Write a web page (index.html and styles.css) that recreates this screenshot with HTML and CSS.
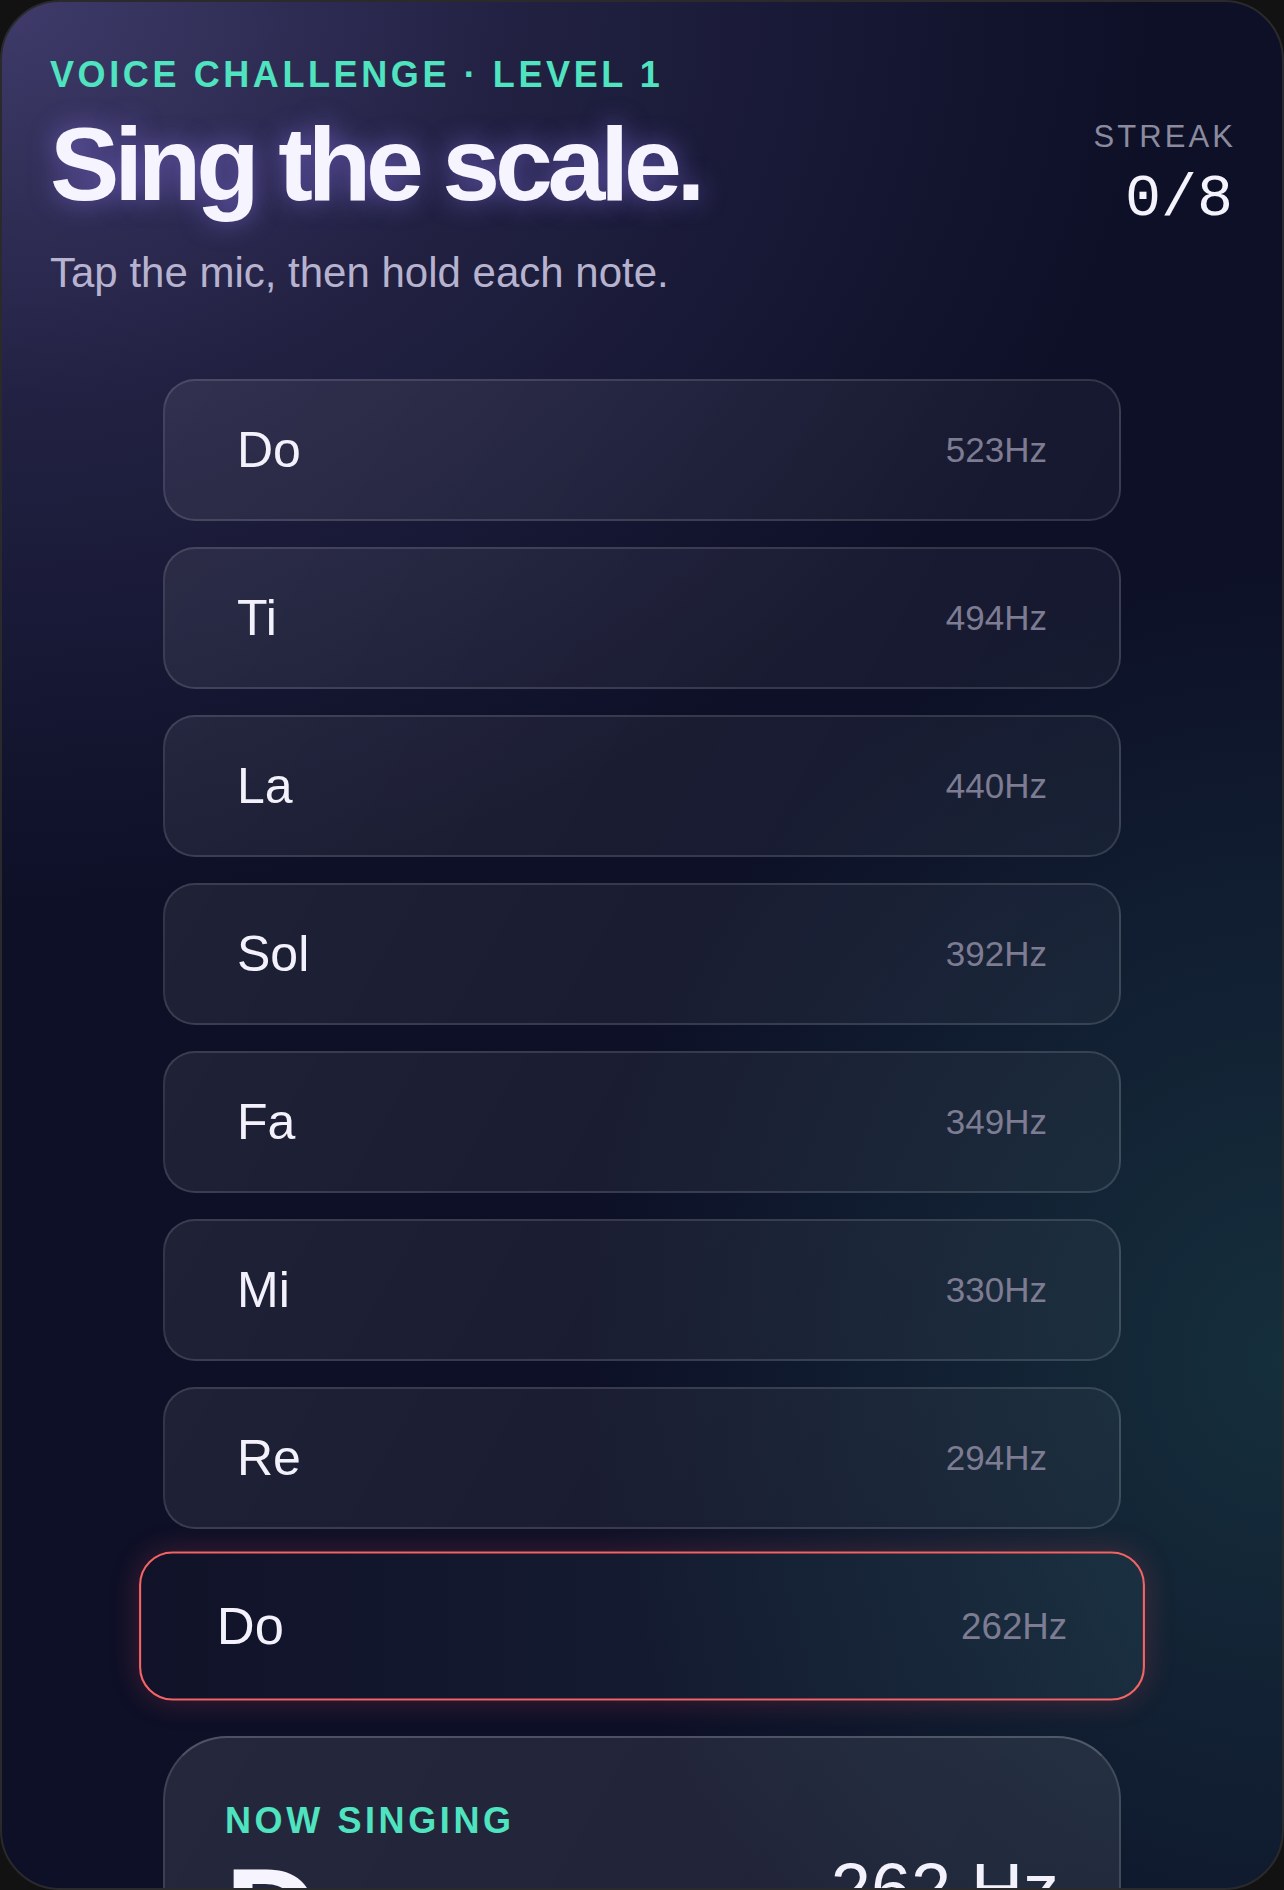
FILE: index.html
```html
<!DOCTYPE html>
<html>
<head>
    <title>Voice Challenge</title>
    <link rel="stylesheet" href="styles.css">
</head>
<body>
    <div class="device">
        <div class="top">
            <div class="eyebrow">Voice Challenge · Level 1</div>
            <div class="title-row">
                <h1 class="title">Sing the scale.</h1>
                <div class="streak">
                    <div class="streak-label">Streak</div>
                    <div class="streak-count">0/8</div>
                </div>
            </div>
            <p class="sub">Tap the mic, then hold each note.</p>
        </div>

        <div class="notes">
            <div class="note"><span class="name">Do</span><span class="hz">523Hz</span></div>
            <div class="note"><span class="name">Ti</span><span class="hz">494Hz</span></div>
            <div class="note"><span class="name">La</span><span class="hz">440Hz</span></div>
            <div class="note"><span class="name">Sol</span><span class="hz">392Hz</span></div>
            <div class="note"><span class="name">Fa</span><span class="hz">349Hz</span></div>
            <div class="note"><span class="name">Mi</span><span class="hz">330Hz</span></div>
            <div class="note"><span class="name">Re</span><span class="hz">294Hz</span></div>
            <div class="note active"><span class="name">Do</span><span class="hz">262Hz</span></div>
        </div>

        <div class="now">
            <div class="now-label">Now singing</div>
            <div class="now-row">
                <span class="now-name">Do</span>
                <span class="now-hz">262 Hz</span>
            </div>
        </div>
    </div>
</body>
</html>
```

FILE: styles.css
```css
html, body { margin: 0; padding: 0; }
body {
    background: #121212;
    font-family: "Liberation Sans", Arial, sans-serif;
    color: #f3f1fb;
}
.device {
    box-sizing: border-box;
    height: 100vh;
    overflow: hidden;
    border: 2px solid #2a2a2c;
    border-radius: 60px;
    background:
        radial-gradient(ellipse 1150px 900px at 0% 0%, rgba(66, 61, 110, 0.95) 0%, rgba(50, 46, 88, 0.55) 45%, rgba(14, 16, 39, 0) 100%),
        radial-gradient(ellipse 700px 800px at 100% 72%, rgba(28, 72, 78, 0.55) 0%, rgba(14, 16, 39, 0) 100%),
        #0d1027;
}

/* header */
.top { padding: 55px 49px 0 48px; }
.eyebrow {
    font-weight: bold;
    font-size: 36px;
    line-height: 1;
    letter-spacing: 0.1em;
    text-transform: uppercase;
    color: #4fe3bf;
}
.title-row {
    display: flex;
    justify-content: space-between;
    align-items: flex-start;
    margin-top: 19px;
}
.title {
    margin: 0;
    font-size: 104px;
    line-height: 1;
    font-weight: bold;
    letter-spacing: -0.05em;
    color: #f6f4ff;
    text-shadow: 0 0 26px rgba(150, 128, 255, 0.55);
}
.streak {
    text-align: right;
    margin-top: 9px;
}
.streak-label {
    font-size: 31px;
    line-height: 1;
    letter-spacing: 0.1em;
    margin-right: -0.1em;
    text-transform: uppercase;
    color: #8b8a9f;
}
.streak-count {
    font-family: "Liberation Mono", monospace;
    font-size: 60px;
    line-height: 1;
    margin-top: 17px;
    color: #f4f2fb;
}
.sub {
    margin: 23px 0 0;
    font-size: 42px;
    line-height: 1;
    color: #b7b3cf;
}

/* note list */
.notes {
    width: 958px;
    margin: 85px auto 0;
    display: flex;
    flex-direction: column;
    gap: 26px;
}
.note {
    box-sizing: border-box;
    height: 142px;
    padding: 0 72px;
    display: flex;
    align-items: center;
    justify-content: space-between;
    border: 2px solid rgba(255, 255, 255, 0.13);
    border-radius: 32px;
    background: linear-gradient(120deg, rgba(255, 255, 255, 0.075), rgba(255, 255, 255, 0.035));
}
.note .name { font-size: 50px; color: #f3f1fb; }
.note .hz { font-size: 35px; color: #7d7c92; }
.note.active {
    transform: scale(1.05);
    border: 2.5px solid #f46464;
    background: linear-gradient(90deg, rgba(20, 20, 42, 0.55), rgba(40, 70, 84, 0.35));
    box-shadow: 0 0 28px rgba(255, 80, 90, 0.22);
}

/* now singing */
.now {
    box-sizing: border-box;
    width: 958px;
    margin: 39px auto 0;
    padding: 65px 60px;
    border: 2px solid rgba(255, 255, 255, 0.13);
    border-top-color: rgba(255, 255, 255, 0.2);
    border-radius: 64px;
    background: linear-gradient(120deg, rgba(255, 255, 255, 0.1), rgba(255, 255, 255, 0.08));
}
.now-label {
    font-weight: bold;
    font-size: 36px;
    line-height: 1;
    letter-spacing: 0.1em;
    text-transform: uppercase;
    color: #4fe3bf;
}
.now-row {
    display: flex;
    justify-content: space-between;
    align-items: flex-start;
    margin-top: 10px;
}
.now-name {
    font-size: 130px;
    line-height: 1;
    font-weight: bold;
    color: #f6f4ff;
}
.now-hz {
    font-size: 72px;
    line-height: 1;
    margin-top: 4px;
    color: #f3f1fb;
}
```
